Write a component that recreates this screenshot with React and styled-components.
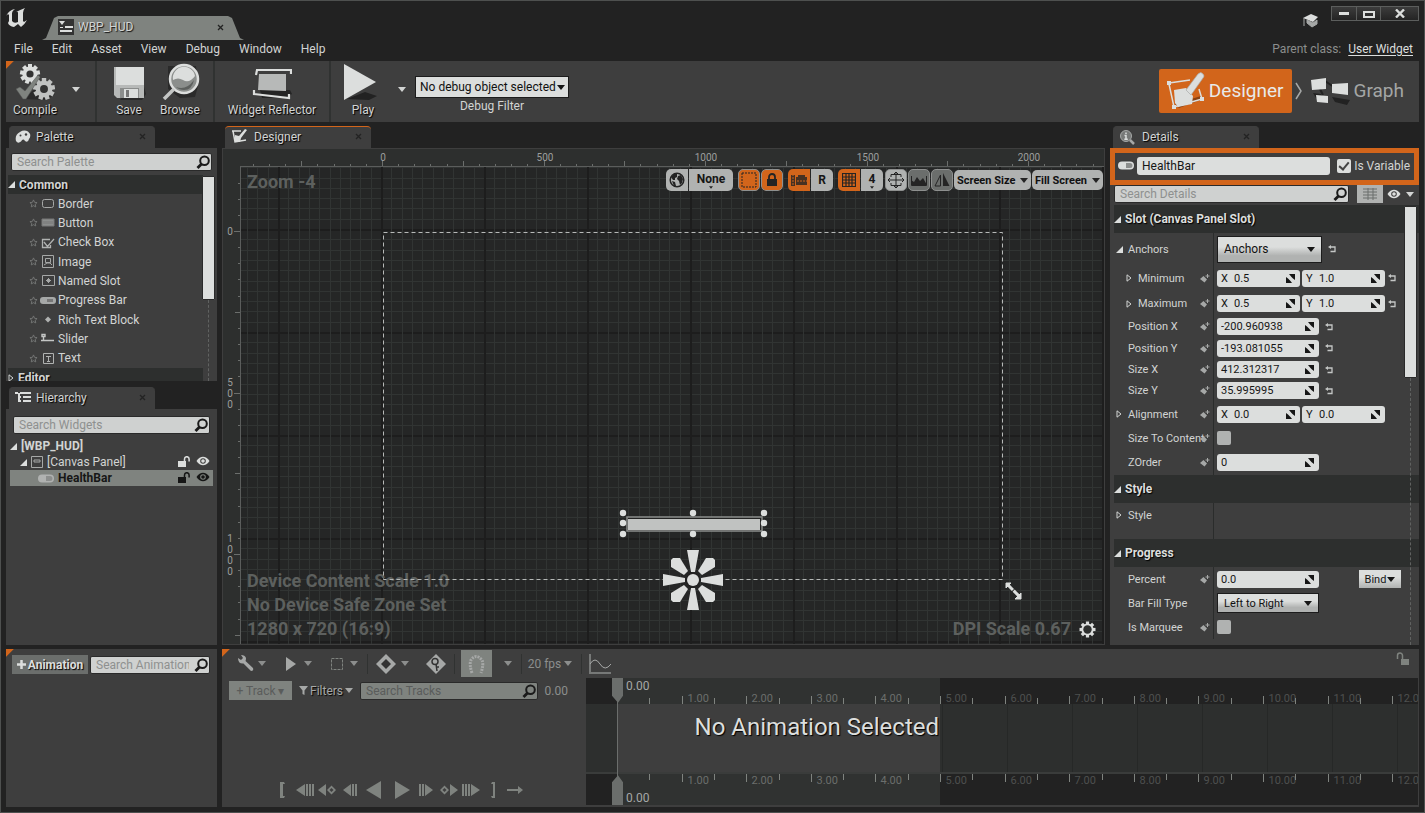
import React from "react";
import styled, { createGlobalStyle, css } from "styled-components";

const c = {
  frame: "#222222",
  panel: "#3e3e3e",
  dark: "#2d2f2e",
  light: "#dcdedd",
  mid: "#b0b2b1",
  grey: "#7f837f",
  text: "#d2d4d3",
  dim: "#8c8e8d",
  orange: "#d2651b",
};

const Global = createGlobalStyle`
  * { box-sizing: border-box; }
  body { margin: 0; background: ${c.frame}; }
  body, button, input, select { font-family: Roboto, "Liberation Sans", sans-serif; font-size: 12px; color: ${c.text}; }
  button, input, select { margin: 0; padding: 0; border: 0; }
  button { background: none; cursor: pointer; }
  svg { display: block; flex: none; }
`;

/* ---------- window frame ---------- */

const Window = styled.div`
  min-height: 100vh;
  display: flex;
  flex-direction: column;
  padding: 0 5px 5px;
  background: ${c.frame};
  border: 1px solid #4e504f;
`;

const TitleBar = styled.header`
  height: 39px;
  display: flex;
  align-items: flex-end;
  gap: 14px;
`;

const Logo = styled.div`
  align-self: flex-start;
  padding-top: 7px;
`;

const DocTab = styled.div`
  width: 202px;
  height: 24px;
  display: flex;
  align-items: center;
  gap: 4px;
  padding: 0 20px 2px 16px;
  background: ${c.grey};
  clip-path: polygon(0 100%, 4px 92%, 12px 8%, 16px 0, 186px 0, 190px 8%, 198px 92%, 100% 100%);
  text-shadow: 1px 1px 1px #111;
  span { flex: 1; }
`;

const TitleRight = styled.div`
  align-self: flex-start;
  margin-left: auto;
  display: flex;
  gap: 13px;
  padding-top: 5px;
`;

const Cap = styled.div`
  padding-top: 8px;
`;

const WindowButtons = styled.div`
  display: flex;
  height: 15px;
  border: 1px solid #5c5e5d;
`;

const WindowButton = styled.button`
  width: ${(p) => (p.$wide ? 38 : 24)}px;
  display: flex;
  align-items: center;
  justify-content: center;
  background: linear-gradient(#3c3c3c, #242424);
  & + & { border-left: 1px solid #5c5e5d; }
`;

const MenuBar = styled.nav`
  height: 21px;
  display: flex;
  align-items: center;
  gap: 19px;
  padding: 0 6px 4px 8px;
`;

const MenuItem = styled.button`
  line-height: 16px;
`;

const ParentClass = styled.div`
  margin-left: auto;
  color: ${c.dim};
  a { color: ${c.light}; margin-left: 4px; text-underline-offset: 2px; }
`;

const corner = css`
  background: linear-gradient(135deg, ${c.orange} 5px, transparent 6px) no-repeat 0 0 / 10px 10px, ${c.panel};
`;

/* ---------- main toolbar ---------- */

const Toolbar = styled.div`
  height: 61px;
  display: flex;
  align-items: center;
  gap: 7px;
  ${corner}
`;

const Tools = styled.div`
  display: flex;
  align-items: center;
  padding-bottom: 4px;
`;

const Tool = styled.button`
  width: ${(p) => p.$w}px;
  height: 56px;
  display: flex;
  flex-direction: column;
  align-items: center;
  justify-content: space-between;
  line-height: 16px;
  white-space: nowrap;
  text-shadow: 1px 1px 1px #000;
`;

const CaretButton = styled.button`
  width: ${(p) => p.$w || 14}px;
  height: 18px;
  display: flex;
  align-items: center;
  justify-content: center;
`;

const Separator = styled.i`
  align-self: stretch;
  width: 2px;
  background: #303231;
`;

const DebugFilter = styled.label`
  display: flex;
  flex-direction: column;
  align-items: center;
  line-height: 16px;
  padding-top: 10px;
`;

const SelectWrap = styled.span`
  position: relative;
  display: inline-flex;
  width: ${(p) => p.$w}px;
  height: ${(p) => p.$h}px;
  > svg { position: absolute; right: ${(p) => (p.$flat ? 4 : 7)}px; top: calc(50% - 2px); pointer-events: none; }
  select {
    appearance: none;
    width: 100%;
    padding: 0 ${(p) => (p.$flat ? 4 : 6)}px;
    color: #111;
    font-size: ${(p) => p.$size || 12}px;
    background: ${(p) => (p.$flat ? c.light : `linear-gradient(${c.light} 40%, ${c.mid} 75%)`)};
    border: 1px solid #1c1c1c;
  }
`;

const Modes = styled.div`
  margin-left: auto;
  display: flex;
  align-items: center;
  gap: 3px;
  padding: 0 11px 2px 0;
`;

const Mode = styled.button`
  height: 44px;
  display: flex;
  align-items: center;
  gap: 4px;
  padding: 0 ${(p) => (p.$on ? 8 : 4)}px;
  font-size: 19px;
  border-radius: 2px;
  color: ${(p) => (p.$on ? "#e8eae9" : "#a4a6a5")};
  background: ${(p) => (p.$on ? c.orange : "transparent")};
`;

/* ---------- panels ---------- */

const Main = styled.main`
  flex: 1;
  display: grid;
  grid-template-columns: 211px 1fr 309px;
  column-gap: 5px;
  padding-top: 4px;
`;

const Column = styled.div`
  display: flex;
  flex-direction: column;
  gap: 6px;
  min-width: 0;
`;

const Panel = styled.section`
  display: flex;
  flex-direction: column;
  flex: ${(p) => (p.$grow ? 1 : "none")};
  min-width: 0;
`;

const Tab = styled.div`
  width: 146px;
  height: 22px;
  margin-left: 3px;
  display: flex;
  align-items: center;
  gap: 5px;
  padding: 0 9px 2px 6px;
  background: ${c.panel};
  border-radius: 4px 4px 0 0;
  border-top: 1px solid ${(p) => (p.$on ? c.orange : c.panel)};
  text-shadow: 1px 1px 1px #000;
  span { flex: 1; }
`;

const PanelBody = styled.div`
  flex: 1;
  display: flex;
  flex-direction: column;
  background: ${c.panel};
`;

const Search = styled.label`
  position: relative;
  display: flex;
  height: 18px;
  flex: 1 1 0;
  min-width: 0;
  input {
    width: 100%;
    min-width: 0;
    padding: 0 20px 0 5px;
    background: ${(p) => (p.$dim ? c.grey : "#cfd1d0")};
    border: 1px solid #2a2a2a;
    border-radius: 2px;
  }
  input::placeholder { color: ${(p) => (p.$dim ? "#5a5c5b" : "#8e908f")}; opacity: 1; }
  svg { position: absolute; right: 1px; top: 2px; }
`;

const SearchRow = styled.div`
  display: flex;
  align-items: center;
  gap: 2px;
  padding: ${(p) => p.$pad || "0"};
`;

const PaletteArea = styled.div`
  display: flex;
  height: 206px;
  padding: 0 3px 0 2px;
  overflow: hidden;
`;

const PaletteList = styled.ul`
  flex: 1;
  margin: 0;
  padding: 0;
  list-style: none;
`;

const PaletteGroup = styled.li`
  height: 19px;
  display: flex;
  align-items: center;
  gap: 4px;
  background: ${c.dark};
  font-weight: 700;
  text-shadow: 1px 1px 1px #000;
`;

const PaletteItems = styled.li`
  height: 174px;
  display: flex;
  flex-direction: column;
`;

const PaletteItem = styled.div`
  flex: 1;
  display: grid;
  grid-template-columns: 9px 16px 1fr;
  align-items: center;
  gap: 2px;
  padding-left: 21px;
  line-height: 16px;
`;

const ScrollTrack = styled.div`
  width: 11px;
  display: flex;
  flex-direction: column;
  align-items: center;
  padding-top: 1px;
  &::before { content: ""; width: 100%; height: ${(p) => p.$thumb}px; background: ${c.light}; border-radius: 1px; border: 1px solid #2a2a2a; }
  &::after { content: ""; flex: 1; border-left: 1px dashed #606261; }
`;

const TreeRow = styled.div`
  height: 16px;
  margin: 0 4px;
  display: flex;
  align-items: center;
  gap: 4px;
  padding: 0 3px 0 ${(p) => p.$indent}px;
  line-height: 16px;
  color: ${(p) => (p.$on ? "#161616" : c.text)};
  background: ${(p) => (p.$on ? c.grey : "transparent")};
  font-weight: ${(p) => (p.$bold ? 700 : 400)};
  span { flex: 1; }
`;

const TreeIcons = styled.div`
  display: flex;
  gap: 5px;
`;

/* ---------- designer canvas ---------- */

const DesignerBody = styled.div`
  flex: 1;
  display: grid;
  grid-template: 17px 1fr / 17px 1fr;
  background: ${c.dark};
  border: 1px solid ${c.panel};
`;

const TopRuler = styled.div`
  grid-column: 2;
  min-width: 0;
  overflow: hidden;
`;

const SideRuler = styled.div`
  position: relative;
  overflow: hidden;
  svg { position: absolute; inset: 0; }
`;

const minor = [10, 21, 31, 41, 52, 62, 72, 82, 93];
const gridLines = (dir) =>
  `linear-gradient(${dir}, #1d1d1d 0 2px, ${minor
    .map((n) => `transparent ${n - 9 < 2 ? 2 : n - 9}px ${n}px, #313433 ${n}px ${n + 1}px, transparent ${n + 1}px`)
    .join(", ")})`;

const Surface = styled.div`
  position: relative;
  overflow: hidden;
  border-left: 1px solid #5b5d5c;
  border-top: 1px solid #5b5d5c;
  background: ${gridLines("to right")} 140px 62px / 103px 103px, ${gridLines("to bottom")} 140px 62px / 103px 103px, #252626;
`;

const CanvasToolbar = styled.div`
  position: absolute;
  top: 2px;
  right: 1px;
  display: flex;
  align-items: center;
  gap: 1px;
`;

const Cluster = styled.div`
  display: flex;
  gap: 1px;
  margin-right: ${(p) => (p.$tight ? 1 : 4)}px;
  border-radius: 5px;
  overflow: hidden;
`;

const CanvasButton = styled.button`
  width: ${(p) => p.$w || 22}px;
  height: 22px;
  display: flex;
  flex-direction: column;
  align-items: center;
  justify-content: center;
  border-radius: ${(p) => (p.$round ? 5 : 0)}px;
  border: ${(p) => (p.$round ? "1px solid #8e908f" : 0)};
  color: #161616;
  font-weight: 700;
  line-height: 14px;
  background: ${(p) => (p.$on ? c.orange : p.$off ? "#6b6e6c" : c.mid)};
`;

const CanvasSelect = styled(SelectWrap)`
  > svg { right: 3px; }
  select { font-weight: 700; padding: 0 3px; background: ${c.mid}; border-radius: 5px; border: 0; }
`;

const CanvasNote = styled.div`
  position: absolute;
  left: 6px;
  ${(p) => (p.$bottom ? "bottom: 3px;" : "top: 3px;")}
  font-size: 18px;
  line-height: 24px;
  font-weight: 700;
  color: #5d605e;
`;

const DpiNote = styled(CanvasNote)`
  left: auto;
  right: 8px;
  display: flex;
  align-items: center;
  gap: 8px;
`;

const Artboard = styled.svg`
  position: absolute;
  left: 0;
  top: 0;
`;

/* ---------- details ---------- */

const NameBox = styled.div`
  height: 37px;
  display: flex;
  align-items: center;
  gap: 3px;
  padding: 0 4px 2px 3px;
  border: 5px solid ${c.orange};
  background: ${c.panel};
`;

const NameInput = styled.input`
  flex: 1;
  min-width: 0;
  height: 18px;
  padding: 0 5px;
  margin-right: 4px;
  color: #161616;
  background: ${c.light};
  border-radius: 3px;
`;

const CheckLabel = styled.label`
  display: flex;
  align-items: center;
  gap: 3px;
`;

const Check = styled.input.attrs({ type: "checkbox" })`
  appearance: none;
  width: 14px;
  height: 14px;
  display: flex;
  align-items: center;
  justify-content: center;
  border-radius: 2px;
  background: ${c.mid};
  &:checked { background: ${c.light}; }
  &:checked::after { content: ""; width: 4px; height: 8px; margin-bottom: 2px; border: solid #444; border-width: 0 2px 2px 0; rotate: 40deg; }
`;

const GridToggle = styled.button`
  width: 26px;
  height: 18px;
  margin: 0 2px 0 6px;
  display: flex;
  align-items: center;
  justify-content: center;
  background: ${c.mid};
`;

const Properties = styled.div`
  position: relative;
  flex: 1;
  padding-left: 4px;
`;

const PropScroll = styled(ScrollTrack)`
  position: absolute;
  right: 3px;
  top: 0;
  bottom: 0;
`;

const GroupHead = styled.h2`
  height: 28px;
  margin: 0;
  display: flex;
  align-items: center;
  gap: 4px;
  font-size: 12px;
  background: ${c.dark};
  color: ${c.light};
  text-shadow: 1px 1px 1px #000;
`;

const Row = styled.div`
  height: ${(p) => p.$h}px;
  display: grid;
  grid-template-columns: 100px 1fr;
`;

const RowLabel = styled.div`
  min-width: 0;
  display: flex;
  align-items: center;
  gap: 4px;
  padding: 0 3px 0 ${(p) => p.$indent || 0}px;
  border-right: 1px solid #2a2c2b;
  font-size: 11px;
  white-space: nowrap;
  span { flex: 1; min-width: 0; }
`;

const Twist = styled.i`
  width: 10px;
  display: flex;
  justify-content: center;
`;

const RowValue = styled.div`
  display: flex;
  align-items: center;
  gap: 2px;
  padding-left: 3px;
  > svg { margin-left: ${(p) => (p.$pair ? 1 : 4)}px; }
  > button { margin-left: auto; }
`;

const Field = styled.span`
  width: ${(p) => (p.$half ? 83 : 102)}px;
  height: 17px;
  display: flex;
  align-items: center;
  padding: 0 5px 0 4px;
  background: ${c.light};
  border-radius: 3px;
  color: #161616;
  font-size: 11px;
  b { width: 13px; font-weight: 400; }
  input { flex: 1; min-width: 0; width: 100%; background: transparent; color: #161616; font-size: 11px; }
`;

const BindButton = styled.button`
  width: 42px;
  height: 18px;
  margin-right: 18px;
  display: flex;
  align-items: center;
  justify-content: center;
  gap: 1px;
  color: #161616;
  font-size: 11px;
  background: linear-gradient(${c.light} 40%, ${c.mid});
`;

/* ---------- bottom ---------- */

const Bottom = styled.div`
  height: 162px;
  display: grid;
  grid-template-columns: 211px 1fr;
  column-gap: 5px;
  padding-top: 4px;
`;

const BottomPanel = styled.section`
  display: flex;
  flex-direction: column;
  min-width: 0;
  ${corner}
`;

const AnimationButton = styled.button`
  width: 76px;
  height: 19px;
  display: flex;
  align-items: center;
  justify-content: center;
  gap: 2px;
  font-weight: 700;
  color: ${c.light};
  background: #6b6e6c;
  text-shadow: 1px 1px 1px #000;
`;

const SeqToolbar = styled.div`
  height: 29px;
  display: flex;
  align-items: center;
  padding: 0 9px 0 7px;
  color: ${c.dim};
  > svg:last-child { margin: 0 0 10px auto; }
`;

const SeqGroup = styled.div`
  display: flex;
  align-items: center;
  gap: 12px;
  height: 20px;
  padding: 0 6px;
  & + & { border-left: 1px solid #303231; }
`;

const Pair = styled.div`
  display: flex;
  align-items: center;
  gap: ${(p) => p.$gap || 0}px;
`;

const SeqButton = styled.button`
  width: ${(p) => p.$w || 20}px;
  height: ${(p) => (p.$on ? 27 : 20)}px;
  display: flex;
  align-items: center;
  justify-content: center;
  color: ${c.dim};
  white-space: nowrap;
  background: ${(p) => (p.$on ? c.grey : "transparent")};
`;

const SeqBody = styled.div`
  flex: 1;
  display: grid;
  grid-template-columns: 364px 1fr;
  padding-bottom: 2px;
`;

const SeqLeft = styled.div`
  display: flex;
  flex-direction: column;
  justify-content: space-between;
`;

const TrackRow = styled.div`
  display: flex;
  align-items: center;
  gap: 7px;
  padding: 3px 18px 0 7px;
  color: ${c.dim};
`;

const TrackButton = styled.button`
  width: 63px;
  height: 19px;
  color: #5a5c5b;
  background: ${c.grey};
`;

const FilterButton = styled.button`
  display: flex;
  align-items: center;
  gap: 2px;
  color: #a6a8a7;
  text-shadow: 1px 1px 1px #000;
`;

const Transport = styled.div`
  height: 31px;
  display: flex;
  align-items: center;
  gap: 1px;
  padding-left: 50px;
  color: ${c.grey};
`;

const TransportButton = styled.button`
  width: ${(p) => (p.$big ? 27 : 21)}px;
  display: flex;
  justify-content: center;
`;

const Timeline = styled.div`
  position: relative;
  min-width: 0;
  overflow: hidden;
  margin-right: 1px;
  display: flex;
  flex-direction: column;
`;

const TimeRuler = styled.div`
  height: ${(p) => p.$h}px;
  background: linear-gradient(to right, ${c.frame} 31px, #303231 31px 354px, ${c.frame} 354px);
`;

const TrackArea = styled.div`
  flex: 1;
  padding-top: 8px;
  font-size: 24px;
  line-height: 30px;
  color: ${c.light};
  text-shadow: 1px 1px 1px #000;
  border-bottom: 2px solid #3a3c3b;
  background: linear-gradient(${c.panel}, ${c.panel}) 31px 0 / 323px 100% no-repeat,
    repeating-linear-gradient(to right, #262827 0 1px, ${c.dark} 1px 65px) 31px 0;
  p { width: 353px; margin: 0; text-align: right; white-space: nowrap; }
`;

const Playhead = styled.svg`
  position: absolute;
  left: 25px;
  top: 0;
  height: 100%;
`;

/* ---------- icons ---------- */

const Caret = ({ s = 8, fill = c.text }) => (
  <svg width={s} height={s / 2 + 1} viewBox="0 0 8 5"><path d="M0 0h8L4 5z" fill={fill} /></svg>
);
const Close = () => (
  <svg width="7" height="7" viewBox="0 0 7 7"><path d="M1 1l5 5M6 1L1 6" stroke="#232323" strokeWidth="1.3" /></svg>
);
const Glass = () => (
  <svg width="15" height="14" viewBox="0 0 15 14"><circle cx="8.5" cy="5.8" r="4.3" fill="none" stroke="#1a1a1a" strokeWidth="2" /><path d="M5.5 9L1.5 13" stroke="#1a1a1a" strokeWidth="2.8" /></svg>
);
const Open = () => <svg width="7" height="7" viewBox="0 0 7 7"><path d="M7 0v7H0z" fill={c.light} /></svg>;
const Closed = () => <svg width="6" height="8" viewBox="0 0 6 8"><path d="M1 .8v6.4L5 4z" fill="none" stroke={c.text} /></svg>;
const Star = () => (
  <svg width="9" height="9" viewBox="0 0 10 10"><path d="M5 1l1.2 2.7 2.8.3-2.1 1.9.6 2.9L5 7.4 2.5 8.8l.6-2.9L1 4l2.8-.3z" fill="none" stroke="#777978" /></svg>
);
const Eye = ({ color = c.light }) => (
  <svg width="14" height="10" viewBox="0 0 14 10"><path d="M.5 5Q3.500.8 7 .8T13.500 5Q10.500 9.300 7 9.300T.5 5z" fill={color} /><circle cx="7" cy="5" r="2.800" fill={color === c.light ? "#3e3e3e" : "#7f837f"} /><circle cx="7" cy="5" r="1.800" fill={color} /></svg>
);
const Unlock = ({ color = c.light }) => (
  <svg width="13" height="12" viewBox="0 0 13 12"><path d="M0 5h8v6H0z" fill={color} /><path d="M6.500 5V3a2.300 2.300 0 0 1 4.600 0v2.500" fill="none" stroke={color} strokeWidth="1.500" /></svg>
);
const TimelineLock = () => (
  <svg width="14" height="14" viewBox="0 0 14 14"><path d="M1.500 7V3.500a2.500 2.500 0 0 1 5 0V7" fill="none" stroke={c.grey} strokeWidth="1.500" /><path d="M5 7h8v6H5z" fill={c.grey} /></svg>
);
const KeyAdd = () => (
  <svg width="10" height="9" viewBox="0 0 10 9"><path d="M3.500 2L7 5.500 4.500 8.500 0 5z" fill="#a6a8a7" /><path d="M7.500 0v4M5.500 2h4" stroke="#a6a8a7" /></svg>
);
const Reset = () => (
  <svg width="8" height="8" viewBox="0 0 8 8"><path d="M2 2h5v4.500H2.500" fill="none" stroke="#c4c6c5" strokeWidth="1.300" /><path d="M3 0v4L0 2z" fill="#c4c6c5" /></svg>
);
const Spin = () => (
  <svg width="9" height="9" viewBox="0 0 9 9"><path d="M3 0h6v6L7 4.500 5.500 3zM0 3v6h6L4.500 7 2 4.500z" fill="#161616" /></svg>
);
const Pill = ({ fill = "#a6a8a7" }) => (
  <svg width="16" height="9" viewBox="0 0 16 9"><rect y=".5" width="16" height="8" rx="4" fill={fill} /><path d="M8 2h4a2.500 2.500 0 0 1 0 5H8z" fill="#8c8e8d" /></svg>
);

const gear = (cx, cy, r, teeth, fill, hole) => (
  <g transform={`translate(${cx} ${cy})`}>
    {Array.from({ length: teeth }, (_, i) => (
      <rect key={i} x={-r * 0.2} y={-r} width={r * 0.4} height={r} fill={fill} transform={`rotate(${(360 / teeth) * i})`} />
    ))}
    <circle r={r * 0.76} fill={fill} />
    <circle r={r * 0.36} fill={hole} />
  </g>
);

const CompileIcon = () => (
  <svg width="40" height="38" viewBox="0 0 40 38">
    <path d="M8 37l18-15 14 10-8 6z" fill="#2a2a2a" />
    {gear(15, 12, 10, 9, c.light, "#333")}
    {gear(29, 27, 11, 9, "#c0c2c1", "#333")}
    <path d="M1 27l4-2 5 4L23 13l2 2L11 37H8z" fill={c.grey} stroke="#555" strokeWidth=".5" />
  </svg>
);
const SaveIcon = () => (
  <svg width="34" height="38" viewBox="0 0 34 38">
    <path d="M28 10l6 22-4 6H8z" fill="#2a2a2a" />
    <path d="M2 5h30v31H5l-3-3z" fill="#b7b9b8" /><path d="M4 5h28v18H4z" fill={c.light} />
    <path d="M8 26h19v10H8z" fill="#8b8d8c" /><path d="M12 27h14v9H12z" fill={c.light} /><path d="M14 28h3v7h-3z" fill="#777" />
  </svg>
);
const BrowseIcon = () => (
  <svg width="40" height="38" viewBox="0 0 40 38">
    <path d="M8 4h28l2 20-3 11-15 1-12-9z" fill="#2a2a2a" />
    <circle cx="24" cy="17" r="14" fill="#8b8e8c" stroke={c.light} strokeWidth="2.500" />
    <path d="M13 18a11 11 0 0 1 22-4q-6 8-12 4-5-3-10 0z" fill={c.light} /><path d="M16 25q10 4 18-7-2 10-10 10-5 0-8-3z" fill="#5d605e" />
    <path d="M14 27L4 37" stroke="#c4c6c5" strokeWidth="3.500" />
  </svg>
);
const ReflectorIcon = () => (
  <svg width="40" height="38" viewBox="0 0 40 38">
    <path d="M8 28h30l2 4-6 4H10z" fill="#242424" />
    <path d="M4 13l1-5h34v4M2 28v4l35 4v-4" fill="none" stroke={c.light} strokeWidth="2.200" />
    <path d="M7 12h27v17L6 28z" fill="#b7b9b8" />
  </svg>
);
const PlayIcon = () => (
  <svg width="40" height="38" viewBox="0 0 40 38"><path d="M4 37l18-7 12 4-8 4z" fill="#222" /><path d="M1 2l32 18L1 38z" fill={c.light} /></svg>
);
const DesignerIcon = () => (
  <svg width="38" height="38" viewBox="0 0 38 38">
    <path d="M8 32l26-8 2 3-24 9z" fill="#8a4112" />
    <path d="M2 11l21-3M2 12l5 23 28-8-3-10" fill="none" stroke={c.light} strokeWidth="1.500" />
    <path d="M0 9h4v4H0zM5 33h4v4H5zM33 25h4v4h-4z" fill={c.light} />
    <path d="M7 18l12-2 7 8-1 8-14 3-3-4z" fill={c.light} /><path d="M19 18L31 2q3-3 5 0 2 2 0 4L24 23z" fill={c.light} stroke="#a9aba9" strokeWidth=".7" />
  </svg>
);
const GraphIcon = () => (
  <svg width="40" height="28" viewBox="0 0 40 28">
    <path d="M3 16l8 1 3 5-8-1zM22 20l18 3-3 5-12-3z" fill="#222" />
    <path d="M15 4l9 6M10 12l3 6" stroke="#222" strokeWidth="2" />
    <path d="M1 3l15-2v11L2 13zM22 7l16-1v12l-16-2zM6 18l12 1v7L7 25z" fill={c.light} />
  </svg>
);

const smallIcons = {
  Border: <rect x="2.500" y="2.500" width="11" height="8" rx="2" fill="none" stroke="#a6a8a7" />,
  Button: <path d="M2 3h12v7H2zM4 5v3M6 5v3M8 5v3M10 5v3M12 5v3" fill="#8c8e8d" stroke="#777" />,
  "Check Box": <path d="M10 3.500H2.500v8h8V9M4 6l3.500 4.500L14 3" fill="none" stroke="#b0b2b1" strokeWidth="1.300" />,
  Image: <path d="M2.500.5h11v12h-11zM5.500 3.500h5v4h-5zM4 10l3-2h3l2 2" fill="none" stroke="#a6a8a7" />,
  "Named Slot": <path d="M2.500 1.500h12v10h-12zM8.500 4v5M6 6.500h5M7 5l3 3M10 5L7 8" fill="none" stroke="#a6a8a7" />,
  "Progress Bar": <><rect x="0" y="3" width="16" height="7" rx="3" fill="#a6a8a7" /><path d="M7 5h6v3H7z" fill="#777" /></>,
  "Rich Text Block": <path d="M8 3.500l3 3-3 3-3-3z" fill="#b0b2b1" />,
  Slider: <path d="M2 2.500h3v2H2zM3.500 5v3M1 8.500h13" fill="none" stroke="#c4c6c5" strokeWidth="1.400" />,
  Text: <path d="M3.500 1.500h10v10h-10zM6 4.500h5M8.500 4.500v5M7 9.500h3" fill="none" stroke="#b0b2b1" />,
};
const Small = ({ name }) => <svg width="16" height="13" viewBox="0 0 16 13">{smallIcons[name]}</svg>;

/* ---------- rulers and canvas drawing ---------- */

const tickText = { fontSize: 10, fill: "#9c9e9d", textAnchor: "middle" };

function HorizontalRuler() {
  const ticks = [];
  for (let i = -8; i < 60; i++) ticks.push(i);
  return (
    <svg width="100%" height="17">
      {ticks.map((i) => {
        const x = Math.round(142 + i * 16.15) + 0.5;
        return <path key={i} d={`M${x} 17v-${i % 5 === 0 ? 5 : 2}`} stroke="#6b6e6c" />;
      })}
      {[0, 500, 1000, 1500, 2000].map((n) => (
        <text key={n} x={Math.round(143 + n * 0.323)} y="12" {...tickText}>{n}</text>
      ))}
    </svg>
  );
}

function VerticalRuler() {
  const ticks = [];
  for (let i = -3; i < 40; i++) ticks.push(i);
  return (
    <svg width="17" height="100%">
      {ticks.map((i) => {
        const y = Math.round(65 + i * 16.15) + 0.5;
        return <path key={i} d={`M17 ${y}h-${i % 10 === 0 ? 6 : i % 5 === 0 ? 5 : 2}`} stroke="#6b6e6c" />;
      })}
      {["0", "500", "1000"].map((n, k) =>
        n.split("").map((d, j) => (
          <text key={n + j} x="7" y={Math.round(69 + k * 161.5 + (j - (n.length - 1) / 2) * 11)} {...tickText}>{d}</text>
        ))
      )}
    </svg>
  );
}

const Handle = ({ x, y }) => <circle cx={x} cy={y} r="3.200" fill={c.light} />;

function CanvasDrawing() {
  return (
    <Artboard width="100%" height="100%">
      <rect x="142.500" y="65.500" width="619" height="347" fill="none" stroke="#b7b9b8" strokeDasharray="4 3" />
      <rect x="386" y="350" width="135" height="14" fill="#222" stroke="#8c8e8d" strokeWidth="1.500" />
      <rect x="387" y="352" width="132" height="11" fill="#c0c2c1" />
      {[382, 452, 523].map((x) => [346, 356, 367].map((y) => (x === 452 && y === 356 ? null : <Handle key={x + "-" + y} x={x} y={y} />)))}
      <g transform="translate(452 413)">
        <path d="M-18 0h36" stroke="#222" strokeWidth="2" />
        {[0, 90, 180, 270].map((a) => (
          <g key={a} transform={`rotate(${a})`} fill={c.light}>
            <path d="M-6-30H6L2-8h-4z" />
            <path d="M13-22h7l2 2v7L9-5 5-9z" />
          </g>
        ))}
        <circle r="7.500" fill="#222" />
        <circle r="6" fill={c.light} />
      </g>
      <path d="M767 418l11 11" stroke={c.light} strokeWidth="3" strokeDasharray="7 1" />
      <path d="M765 416h5l-5 5zM780 426v6h-6z" fill={c.light} stroke={c.light} />
    </Artboard>
  );
}

function TimeTicks({ top }) {
  const items = [];
  for (let i = 1; i < 40; i++) items.push(i);
  return (
    <svg width="100%" height={top ? 26 : 31}>
      {items.map((i) => {
        const x = Math.round(31 + i * 32.3) + 0.5;
        const h = i % 2 ? 6 : 8;
        return (
          <g key={i}>
            <path d={top ? `M${x} 26v-${h}` : `M${x} 0v${h}`} stroke="#7f837f" />
            {i % 2 === 0 && i <= 24 && (
              <text x={x + 5} y={top ? 24 : 10} fontSize="11" fill={i >= 10 ? "#4e504f" : "#6b6e6c"}>{(i / 2).toFixed(2)}</text>
            )}
          </g>
        );
      })}
      <text x="40" y={top ? 12 : 28} fontSize="12" fill="#a6a8a7">0.00</text>
    </svg>
  );
}

const T = ({ d, w = 18 }) => <svg width={w} height="18" viewBox={`0 0 ${w} 18`}><path d={d} fill={c.grey} /></svg>;

const transport = [
  ["Set start", "M6 1h4l1 2H9v12h2l-1 2H6z"],
  ["To start", "M0 9l9-6v12zM10 3h2v12h-2zM13 3h2v12h-2zM16 3h2v12h-2z"],
  ["Previous key", "M0 9l8-6v12zM13.500 4.500L18 9l-4.500 4.500L9 9zM13.500 7L11.500 9l2 2 2-2z"],
  ["Previous frame", "M3 9l8-6v12zM12 3h2v12h-2zM15 3h2v12h-2z"],
  ["Play backwards", "M1 9l15-9v18z", true],
  ["Play", "M2 0l15 9-15 9z", true],
  ["Next frame", "M1 3h2v12H1zM4 3h2v12H4zM7 3l8 6-8 6z"],
  ["Next key", "M4.500 4.500L9 9l-4.500 4.500L0 9zM4.500 7L2.500 9l2 2 2-2zM10 3l8 6-8 6z"],
  ["To end", "M0 3h2v12H0zM3 3h2v12H3zM6 3h2v12H6zM9 3l9 6-9 6z"],
  ["Set end", "M11 1H8L7 3h2v12H7l1 2h3z"],
  ["Loop", "M1 8h11V5l5 4-5 4v-3H1z"],
];

/* ---------- rows of the details panel ---------- */

const num = (name, v) => <Field><input aria-label={name} defaultValue={v} /><Spin /></Field>;
const pair = (name, x, y) => (
  <>
    <Field $half><b>X</b><input aria-label={`${name} X`} defaultValue={x} /><Spin /></Field>
    <Field $half><b>Y</b><input aria-label={`${name} Y`} defaultValue={y} /><Spin /></Field>
  </>
);

function Property({ label, h = 24, twist, indent, keyed = true, reset, children }) {
  return (
    <Row $h={h}>
      <RowLabel $indent={indent ? 10 : 0}>
        <Twist>{twist === "open" ? <Open /> : twist ? <Closed /> : null}</Twist>
        <span>{label}</span>
        {keyed && <KeyAdd />}
      </RowLabel>
      <RowValue $pair={indent}>
        {children}
        {reset && <Reset />}
      </RowValue>
    </Row>
  );
}

function Details() {
  return (
    <Panel $grow>
      <Tab>
        <svg width="18" height="16" viewBox="0 0 18 16"><circle cx="7" cy="7" r="5.500" fill="#777978" stroke="#a6a8a7" /><path d="M7 3.500v1.600M5.500 6.500H7V10M5.300 10.300h3.500" stroke={c.light} strokeWidth="1.500" fill="none" /><path d="M11 11l4 4" stroke="#a6a8a7" strokeWidth="2.500" /></svg>
        <span>Details</span><Close />
      </Tab>
      <PanelBody>
        <NameBox>
          <Pill fill={c.light} />
          <NameInput aria-label="Widget name" defaultValue="HealthBar" />
          <CheckLabel><Check defaultChecked />Is Variable</CheckLabel>
        </NameBox>
        <SearchRow $pad="0 2px 2px 4px">
          <Search><input aria-label="Search Details" placeholder="Search Details" /><Glass /></Search>
          <GridToggle aria-label="Property matrix"><svg width="14" height="12" viewBox="0 0 14 12"><path d="M0 1h14M0 4h14M0 7h14M0 10h14M5 0v12M10 0v12" stroke="#6b6e6c" /></svg></GridToggle>
          <Eye /><CaretButton aria-label="View options"><Caret /></CaretButton>
        </SearchRow>
        <Properties>
          <GroupHead><Open />Slot (Canvas Panel Slot)</GroupHead>
          <Property label="Anchors" h={32} twist="open" keyed={false} reset>
            <SelectWrap $w={105} $h={27}><select aria-label="Anchors"><option>Anchors</option></select><Caret fill="#161616" /></SelectWrap>
          </Property>
          <Property label="Minimum" h={26} twist="closed" indent reset>{pair("Minimum", "0.5", "1.0")}</Property>
          <Property label="Maximum" h={25} twist="closed" indent reset>{pair("Maximum", "0.5", "1.0")}</Property>
          <Property label="Position X" h={21} reset>{num("Position X", "-200.960938")}</Property>
          <Property label="Position Y" h={22} reset>{num("Position Y", "-193.081055")}</Property>
          <Property label="Size X" h={21} reset>{num("Size X", "412.312317")}</Property>
          <Property label="Size Y" h={21} reset>{num("Size Y", "35.995995")}</Property>
          <Property label="Alignment" h={26} twist="closed">{pair("Alignment", "0.0", "0.0")}</Property>
          <Property label="Size To Content" h={22}><Check aria-label="Size To Content" /></Property>
          <Property label="ZOrder" h={26}>{num("ZOrder", "0")}</Property>
          <GroupHead><Open />Style</GroupHead>
          <Property label="Style" twist="closed" keyed={false} />
          <Row $h={12}><RowLabel /></Row>
          <GroupHead><Open />Progress</GroupHead>
          <Property label="Percent">{num("Percent", "0.0")}<BindButton>Bind<Caret fill="#161616" /></BindButton></Property>
          <Property label="Bar Fill Type" keyed={false}>
            <SelectWrap $w={102} $h={20} $size={11}><select aria-label="Bar Fill Type"><option>Left to Right</option></select><Caret fill="#161616" /></SelectWrap>
          </Property>
          <Property label="Is Marquee"><Check aria-label="Is Marquee" /></Property>
          <PropScroll $thumb={170} />
        </Properties>
      </PanelBody>
    </Panel>
  );
}

function Palette() {
  return (
    <Panel>
      <Tab>
        <svg width="16" height="14" viewBox="0 0 16 14"><path d="M5 2Q9-.5 13 1.500 17 5 14 9q-1 4-4 2Q8 8 6 11.500 3 14 1 11-.5 5 5 2z" fill={c.light} /><circle cx="11" cy="4.500" r="1.200" fill={c.panel} /><circle cx="5.500" cy="5.500" r="1" fill={c.panel} /></svg>
        <span>Palette</span><Close />
      </Tab>
      <PanelBody>
        <SearchRow $pad="5px 5px 4px"><Search><input aria-label="Search Palette" placeholder="Search Palette" /><Glass /></Search></SearchRow>
        <PaletteArea>
          <PaletteList>
            <PaletteGroup><Open />Common</PaletteGroup>
            <PaletteItems>
              {Object.keys(smallIcons).map((n) => (
                <PaletteItem key={n}><Star /><Small name={n} />{n}</PaletteItem>
              ))}
            </PaletteItems>
            <PaletteGroup><Closed />Editor</PaletteGroup>
          </PaletteList>
          <ScrollTrack $thumb={122} />
        </PaletteArea>
      </PanelBody>
    </Panel>
  );
}

function Hierarchy() {
  return (
    <Panel $grow>
      <Tab>
        <svg width="16" height="14" viewBox="0 0 16 14"><path d="M0 2h3M5 2h11M3 6h3M8 6h8M3 10h3M8 10h8M4 2v9" stroke={c.light} strokeWidth="2" /></svg>
        <span>Hierarchy</span><Close />
      </Tab>
      <PanelBody>
        <SearchRow $pad="7px 7px 4px"><Search><input aria-label="Search Widgets" placeholder="Search Widgets" /><Glass /></Search></SearchRow>
        <TreeRow $indent={0} $bold><Open /><span>[WBP_HUD]</span></TreeRow>
        <TreeRow $indent={10}>
          <Open />
          <svg width="12" height="12" viewBox="0 0 12 12"><path d="M.5.5h11v11H.5zM3 4h6v2H3z" fill="none" stroke="#a6a8a7" /></svg>
          <span>[Canvas Panel]</span>
          <TreeIcons><Unlock /><Eye /></TreeIcons>
        </TreeRow>
        <TreeRow $indent={28} $on $bold>
          <Pill fill="#b0b2b1" /><span>HealthBar</span>
          <TreeIcons><Unlock color="#161616" /><Eye color="#161616" /></TreeIcons>
        </TreeRow>
      </PanelBody>
    </Panel>
  );
}

const ink = "#242424";

function Designer() {
  return (
    <Panel $grow>
      <Tab $on>
        <svg width="18" height="15" viewBox="0 0 18 15"><path d="M1 2h9M2 2l2 11 11-2" stroke={c.light} strokeWidth="1.500" fill="none" /><path d="M4 6l4 1 6-7 2 1-6 8-1 4-5-1z" fill={c.light} /></svg>
        <span>Designer</span><Close />
      </Tab>
      <DesignerBody>
        <TopRuler><HorizontalRuler /></TopRuler>
        <SideRuler><VerticalRuler /></SideRuler>
        <Surface>
          <CanvasNote>Zoom -4</CanvasNote>
          <CanvasNote $bottom>Device Content Scale 1.0<br />No Device Safe Zone Set<br />1280 x 720 (16:9)</CanvasNote>
          <DpiNote $bottom>
            DPI Scale 0.67
            <svg width="17" height="17" viewBox="-8.500 -8.500 17 17">{gear(0, 0, 8, 8, c.light, c.dark)}<circle r="4.200" fill={c.dark} /></svg>
          </DpiNote>
          <CanvasDrawing />
          <CanvasToolbar>
            <Cluster>
              <CanvasButton aria-label="Localization"><svg width="16" height="16" viewBox="0 0 16 16"><circle cx="8" cy="8" r="6.800" fill="none" stroke={ink} strokeWidth="1.500" /><path d="M2 5l3-3 3 0 0 3-2 1 0 2-2 0zM3 9l3 1 1 4-2 0zM9 4l3-1 2 4-1 4-2 2-1-4-2-2z" fill={ink} /></svg></CanvasButton>
              <CanvasButton $w={44}>None<Caret s={4} fill={ink} /></CanvasButton>
            </Cluster>
            <CanvasButton $on $round aria-label="Outline"><svg width="16" height="16" viewBox="0 0 16 16"><rect x="1" y="1" width="14" height="14" fill="none" stroke={ink} strokeDasharray="2 1" /></svg></CanvasButton>
            <Cluster>
              <CanvasButton $on $round aria-label="Lock"><svg width="12" height="14" viewBox="0 0 12 14"><path d="M1 6h10v7H1z" fill={ink} /><path d="M3 6V4a3 3 0 0 1 6 0v2" fill="none" stroke={ink} strokeWidth="1.800" /></svg></CanvasButton>
            </Cluster>
            <Cluster>
              <CanvasButton $on aria-label="Layout"><svg width="16" height="13" viewBox="0 0 16 13"><path d="M0 1h4v11H0zM5 3h11v8H5zM7 1h7v2H7z" fill={ink} opacity=".8" /><path d="M2 0v13M6 7h10" stroke={c.orange} strokeDasharray="2 1" /></svg></CanvasButton>
              <CanvasButton>R</CanvasButton>
            </Cluster>
            <Cluster $tight>
              <CanvasButton $on aria-label="Grid snapping"><svg width="14" height="14" viewBox="0 0 14 14"><path d="M.5.5h13v13H.5zM4 0v14M7 0v14M10 0v14M0 4h14M0 7h14M0 10h14" fill="none" stroke={ink} strokeWidth="1.200" /></svg></CanvasButton>
              <CanvasButton>4<Caret s={4} fill={ink} /></CanvasButton>
            </Cluster>
            <CanvasButton $round aria-label="Zoom to fit"><svg width="16" height="16" viewBox="0 0 16 16"><path d="M8 0v16M0 8h16M6 2l2-2 2 2M6 14l2 2 2-2M2 6L0 8l2 2M14 6l2 2-2 2M3 5V2.500h10V5M3 11v2.500h10V11" fill="none" stroke={ink} /></svg></CanvasButton>
            <CanvasButton $off $round aria-label="Background image"><svg width="16" height="12" viewBox="0 0 16 12"><path d="M0 11V6l3 2 3-5 3 4 3-3 4 7z" fill={ink} /><path d="M.5 2v9.500h15V2" fill="none" stroke={ink} /></svg></CanvasButton>
            <CanvasButton $off $round aria-label="Flip"><svg width="16" height="14" viewBox="0 0 16 14"><path d="M9 0l6.500 13H9z" fill={ink} /><path d="M6.500 2v11H1z" fill="none" stroke={ink} /></svg></CanvasButton>
            <CanvasSelect $w={77} $h={20} $size={11}><select aria-label="Screen Size"><option>Screen Size</option></select><Caret fill={ink} /></CanvasSelect>
            <CanvasSelect $w={71} $h={20} $size={11}><select aria-label="Fill Screen"><option>Fill Screen</option></select><Caret fill={ink} /></CanvasSelect>
          </CanvasToolbar>
        </Surface>
      </DesignerBody>
    </Panel>
  );
}

const seqCaret = <CaretButton aria-label="More"><Caret fill={c.dim} /></CaretButton>;

function Sequencer() {
  return (
    <BottomPanel>
      <SeqToolbar>
        <SeqGroup>
          <Pair><SeqButton aria-label="Options"><svg width="17" height="17" viewBox="0 0 17 17"><path d="M1 3l3 2 2-2-2-3q4 0 5 3 0 2-.5 3L16 13q1 3-2 3L6.500 8.500Q1 9 1 3z" fill="#a6a8a7" /></svg></SeqButton>{seqCaret}</Pair>
          <Pair><SeqButton aria-label="Playback"><svg width="12" height="14" viewBox="0 0 12 14"><path d="M1 0l10 7-10 7z" fill="#a6a8a7" /></svg></SeqButton>{seqCaret}</Pair>
          <Pair><SeqButton aria-label="Selection"><svg width="12" height="12" viewBox="0 0 12 12"><path d="M.5.5h11v11H.5z" fill="none" stroke="#7f837f" strokeDasharray="3 1" /></svg></SeqButton>{seqCaret}</Pair>
        </SeqGroup>
        <SeqGroup>
          <Pair><SeqButton $w={24} aria-label="Key mode"><svg width="20" height="20" viewBox="0 0 20 20"><path d="M10 0l10 10-10 10L0 10z" fill="#a6a8a7" /><path d="M10 5l5 5-5 5-5-5z" fill="#333" /></svg></SeqButton>{seqCaret}</Pair>
          <SeqButton $w={24} aria-label="Auto key"><svg width="20" height="20" viewBox="0 0 20 20"><path d="M10 0l10 10-10 10L0 10z" fill="#a6a8a7" /><circle cx="9" cy="7.500" r="3" fill="none" stroke="#333" strokeWidth="1.500" /><path d="M10 10l1 7M11 13h2" stroke="#333" strokeWidth="1.500" /></svg></SeqButton>
        </SeqGroup>
        <SeqGroup>
          <Pair $gap={9}><SeqButton $w={31} $on aria-label="Snapping"><svg width="17" height="20" viewBox="0 0 17 20"><path d="M4 19q-3-9-1-13 5-7 11 0 2 4-1 13" fill="none" stroke="#a6a8a7" strokeWidth="3" strokeDasharray="2 1" /></svg></SeqButton>{seqCaret}</Pair>
        </SeqGroup>
        <SeqGroup><Pair><SeqButton $w={33}>20 fps</SeqButton>{seqCaret}</Pair></SeqGroup>
        <SeqGroup><SeqButton $w={24} aria-label="Curve editor"><svg width="22" height="20" viewBox="0 0 22 20"><path d="M1 0v19h21" fill="none" stroke="#777978" strokeWidth="2" /><path d="M1 10q5-8 10 0t11 0" fill="none" stroke="#a6a8a7" /></svg></SeqButton></SeqGroup>
        <TimelineLock />
      </SeqToolbar>
      <SeqBody>
        <SeqLeft>
          <TrackRow>
            <TrackButton>+ Track ▾</TrackButton>
            <FilterButton><svg width="9" height="9" viewBox="0 0 9 9"><path d="M0 0h9L5.500 4.500V9l-2-1V4.500z" fill="#a6a8a7" /></svg>Filters <Caret fill="#a6a8a7" /></FilterButton>
            <Search $dim><input aria-label="Search Tracks" placeholder="Search Tracks" /><Glass /></Search>
            <span>0.00</span>
          </TrackRow>
          <Transport>
            {transport.map(([n, d, big]) => <TransportButton key={n} $big={big} aria-label={n}><T d={d} /></TransportButton>)}
          </Transport>
        </SeqLeft>
        <Timeline>
          <TimeRuler $h={26}><TimeTicks top /></TimeRuler>
          <TrackArea><p>No Animation Selected</p></TrackArea>
          <TimeRuler $h={31}><TimeTicks /></TimeRuler>
          <Playhead width="13" viewBox="0 0 13 128" preserveAspectRatio="none">
            <path d="M1 0h11v18l-5 7-6-7zM1 128h11v-23l-5-7-6 7z" fill="#6b6e6c" /><path d="M6.500 0v128" stroke="#6b6e6c" />
          </Playhead>
        </Timeline>
      </SeqBody>
    </BottomPanel>
  );
}

export default function App() {
  return (
    <Window>
      <Global />
      <TitleBar>
        <Logo><svg width="22" height="20" viewBox="0 0 22 20"><path d="M0 8Q3 2 9 1 6 3 6 5v8q2 3 6 1V5q0-2-2-1Q14 2 19 0q-2 2-2 5v8l1 1 3-2q-2 4-6 7l-3-3-4 3q-5-1-6-4l1-2V7Q2 5 0 8z" fill={c.light} /></svg></Logo>
        <DocTab>
          <svg width="16" height="16" viewBox="0 0 16 16"><path d="M0 0h16v16H0z" fill="#333" /><path d="M1 2h6L4 6zM7 7h8v2H7zM2 8h3v1H2zM2 11h12v2H2z" fill={c.light} /></svg>
          <span>WBP_HUD</span><Close />
        </DocTab>
        <TitleRight>
          <Cap><svg width="15" height="15" viewBox="0 0 15 15"><path d="M0 4l8-4 7 3-5 5z" fill={c.light} /><path d="M4 6l6 3 4-3v4l-5 3-5-4zM1 4v8" fill="#a6a8a7" stroke="#a6a8a7" /></svg></Cap>
          <WindowButtons>
            <WindowButton aria-label="Minimize"><svg width="10" height="3"><path d="M0 0h10v3H0z" fill={c.light} /></svg></WindowButton>
            <WindowButton aria-label="Maximize"><svg width="12" height="8" viewBox="0 0 12 8"><path d="M1 2h10v5H1z" fill="none" stroke={c.light} strokeWidth="2" /></svg></WindowButton>
            <WindowButton $wide aria-label="Close"><svg width="10" height="9" viewBox="0 0 10 9"><path d="M1 .5l8 8M9 .5l-8 8" stroke={c.light} strokeWidth="2.400" /></svg></WindowButton>
          </WindowButtons>
        </TitleRight>
      </TitleBar>
      <MenuBar>
        {["File", "Edit", "Asset", "View", "Debug", "Window", "Help"].map((m) => <MenuItem key={m}>{m}</MenuItem>)}
        <ParentClass>Parent class: <a href="#parent">User Widget</a></ParentClass>
      </MenuBar>
      <Toolbar>
        <Tools><Tool $w={58}><CompileIcon />Compile</Tool><CaretButton $w={24} aria-label="Compile options"><Caret /></CaretButton></Tools>
        <Separator />
        <Tools><Tool $w={50}><SaveIcon />Save</Tool><Tool $w={52}><BrowseIcon />Browse</Tool></Tools>
        <Separator />
        <Tools><Tool $w={100}><ReflectorIcon />Widget Reflector</Tool></Tools>
        <Separator />
        <Tools>
          <Tool $w={50}><PlayIcon />Play</Tool><CaretButton $w={27} aria-label="Play options"><Caret /></CaretButton>
          <DebugFilter>
            <SelectWrap $w={154} $h={22} $flat><select><option>No debug object selected</option></select><Caret fill="#161616" /></SelectWrap>
            Debug Filter
          </DebugFilter>
        </Tools>
        <Modes>
          <Mode $on><DesignerIcon />Designer</Mode>
          <svg width="8" height="18" viewBox="0 0 8 18"><path d="M1 1l5 8-5 8" fill="none" stroke="#a6a8a7" strokeWidth="1.500" /></svg>
          <Mode><GraphIcon />Graph</Mode>
        </Modes>
      </Toolbar>
      <Main>
        <Column><Palette /><Hierarchy /></Column>
        <Column><Designer /></Column>
        <Column><Details /></Column>
      </Main>
      <Bottom>
        <BottomPanel>
          <SearchRow $pad="6px 7px 0 6px">
            <AnimationButton><svg width="9" height="9" viewBox="0 0 9 9"><path d="M4.500 0v9M0 4.500h9" stroke={c.light} strokeWidth="2.500" /></svg>Animation</AnimationButton>
            <Search><input aria-label="Search Animations" placeholder="Search Animations" /><Glass /></Search>
          </SearchRow>
        </BottomPanel>
        <Sequencer />
      </Bottom>
    </Window>
  );
}
